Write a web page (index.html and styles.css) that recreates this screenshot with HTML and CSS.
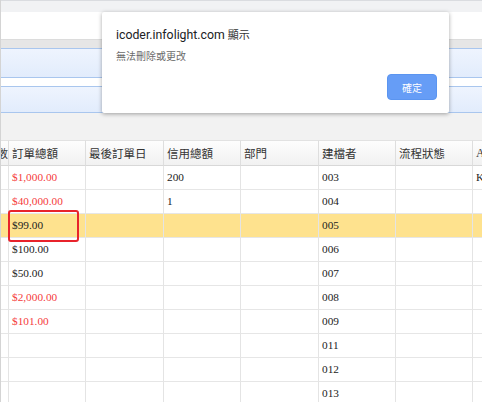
FILE: index.html
```html
<!DOCTYPE html>
<html>
<head>
<meta charset="utf-8">
<link rel="stylesheet" href="styles.css">
</head>
<body>
<div class="page">
  <div class="topbar"></div>
  <div class="whiteband"></div>
  <div class="grayband"></div>
  <div class="panel p1"></div>
  <div class="gap"></div>
  <div class="panel p2"></div>
  <div class="graygap"></div>
  <div class="grid">
    <div class="row head">
      <div class="c c0">數</div><div class="c">訂單總額</div><div class="c">最後訂單日</div><div class="c">信用總額</div><div class="c">部門</div><div class="c">建檔者</div><div class="c">流程狀態</div><div class="c lat">A</div>
    </div>
    <div class="row"><div class="c c0"></div><div class="c red">$1,000.00</div><div class="c"></div><div class="c">200</div><div class="c"></div><div class="c">003</div><div class="c"></div><div class="c">K</div></div>
    <div class="row"><div class="c c0"></div><div class="c red">$40,000.00</div><div class="c"></div><div class="c">1</div><div class="c"></div><div class="c">004</div><div class="c"></div><div class="c"></div></div>
    <div class="row sel"><div class="c c0"></div><div class="c">$99.00</div><div class="c"></div><div class="c"></div><div class="c"></div><div class="c">005</div><div class="c"></div><div class="c"></div></div>
    <div class="row"><div class="c c0"></div><div class="c">$100.00</div><div class="c"></div><div class="c"></div><div class="c"></div><div class="c">006</div><div class="c"></div><div class="c"></div></div>
    <div class="row"><div class="c c0"></div><div class="c">$50.00</div><div class="c"></div><div class="c"></div><div class="c"></div><div class="c">007</div><div class="c"></div><div class="c"></div></div>
    <div class="row"><div class="c c0"></div><div class="c red">$2,000.00</div><div class="c"></div><div class="c"></div><div class="c"></div><div class="c">008</div><div class="c"></div><div class="c"></div></div>
    <div class="row"><div class="c c0"></div><div class="c red">$101.00</div><div class="c"></div><div class="c"></div><div class="c"></div><div class="c">009</div><div class="c"></div><div class="c"></div></div>
    <div class="row"><div class="c c0"></div><div class="c"></div><div class="c"></div><div class="c"></div><div class="c"></div><div class="c">011</div><div class="c"></div><div class="c"></div></div>
    <div class="row"><div class="c c0"></div><div class="c"></div><div class="c"></div><div class="c"></div><div class="c"></div><div class="c">012</div><div class="c"></div><div class="c"></div></div>
    <div class="row"><div class="c c0"></div><div class="c"></div><div class="c"></div><div class="c"></div><div class="c"></div><div class="c">013</div><div class="c"></div><div class="c"></div></div>
  </div>
  <div class="mark"></div>
  <div class="dialog">
    <div class="d-title">icoder.infolight.com <span class="cjk">顯示</span></div>
    <div class="d-msg">無法刪除或更改</div>
    <div class="d-actions"><button class="d-btn">確定</button></div>
  </div>
</div>
</body>
</html>
```
FILE: styles.css
```css
html, body { margin: 0; padding: 0; }
body { width: 482px; height: 402px; overflow: hidden; background: #f2f2f2; }
.page { position: relative; width: 482px; height: 402px; overflow: hidden; border-left: 1px solid #d4d4d4; box-sizing: border-box; }
.topbar { height: 12px; background: #f1f2f4; border-top: 1px solid #dadce0; box-sizing: border-box; }
.whiteband { height: 27px; background: #fff; }
.grayband { height: 9px; background: #e6e6e6; border-top: 1px solid #dcdcdc; box-sizing: border-box; }
.panel { border-top: 1px solid #a9c6ee; border-bottom: 1px solid #a9c6ee; box-sizing: border-box; background: linear-gradient(#eef4fe, #e2ecfc); }
.p1 { height: 30px; }
.gap { height: 8px; background: #fff; }
.p2 { height: 27px; }
.graygap { height: 27px; background: #f2f2f2; }
.grid { background: #fff; overflow: hidden; height: 262px; }
.row { display: grid; grid-template-columns: 78px 77px 78px 77px 78px 77px 77px 77px; margin-left: -70px; height: 24px; }
.c { border-right: 1px solid #e4e4e4; border-bottom: 1px solid #e6e6e6; box-sizing: border-box; padding-left: 3px; font-family: "Liberation Serif", "Noto Sans CJK TC", serif; font-size: 11.3px; color: #222; line-height: 23px; white-space: nowrap; overflow: hidden; }
.red { color: #f53b3b; }
.head { height: 26px; }
.head .c { background: linear-gradient(#fdfdfd, #f1f1f1); border-top: 1px solid #e2e2e2; border-bottom: 1px solid #d8d8d8; border-right-color: #dedede; font-family: "Noto Sans CJK TC", sans-serif; font-size: 11.5px; color: #333; line-height: 24px; }
.head .lat { font-family: "Liberation Serif", serif; font-size: 12px; }
.head .c0 { text-align: right; padding: 0; }
.sel .c { background: #fee28e; }
.mark { position: absolute; left: 7px; top: 210px; width: 71px; height: 32px; border: 2px solid #e8232b; border-radius: 3px; box-sizing: border-box; }
.dialog { position: absolute; left: 101px; top: 12px; width: 347px; height: 101px; background: #fff; border-radius: 2px; box-shadow: 0 1px 4px rgba(0,0,0,.35); box-sizing: border-box; padding: 14px 14px 0 14px; font-family: Roboto, "Noto Sans CJK TC", sans-serif; }
.d-title { font-size: 12.3px; color: #202124; line-height: 17px; }
.d-title .cjk { font-family: "Noto Sans CJK TC", sans-serif; font-size: 11px; color: #333; }
.d-msg { font-family: "Noto Sans CJK TC", sans-serif; font-size: 10px; color: #6b6b6b; margin-top: 5px; line-height: 14px; }
.d-actions { display: flex; justify-content: flex-end; margin-top: 11px; }
.d-btn { width: 50px; height: 26px; margin-right: -2px; background: #669df6; border: 1px solid #5b95f0; border-radius: 4px; color: #fff; font-family: "Noto Sans CJK TC", sans-serif; font-size: 10px; padding: 0; }
```
